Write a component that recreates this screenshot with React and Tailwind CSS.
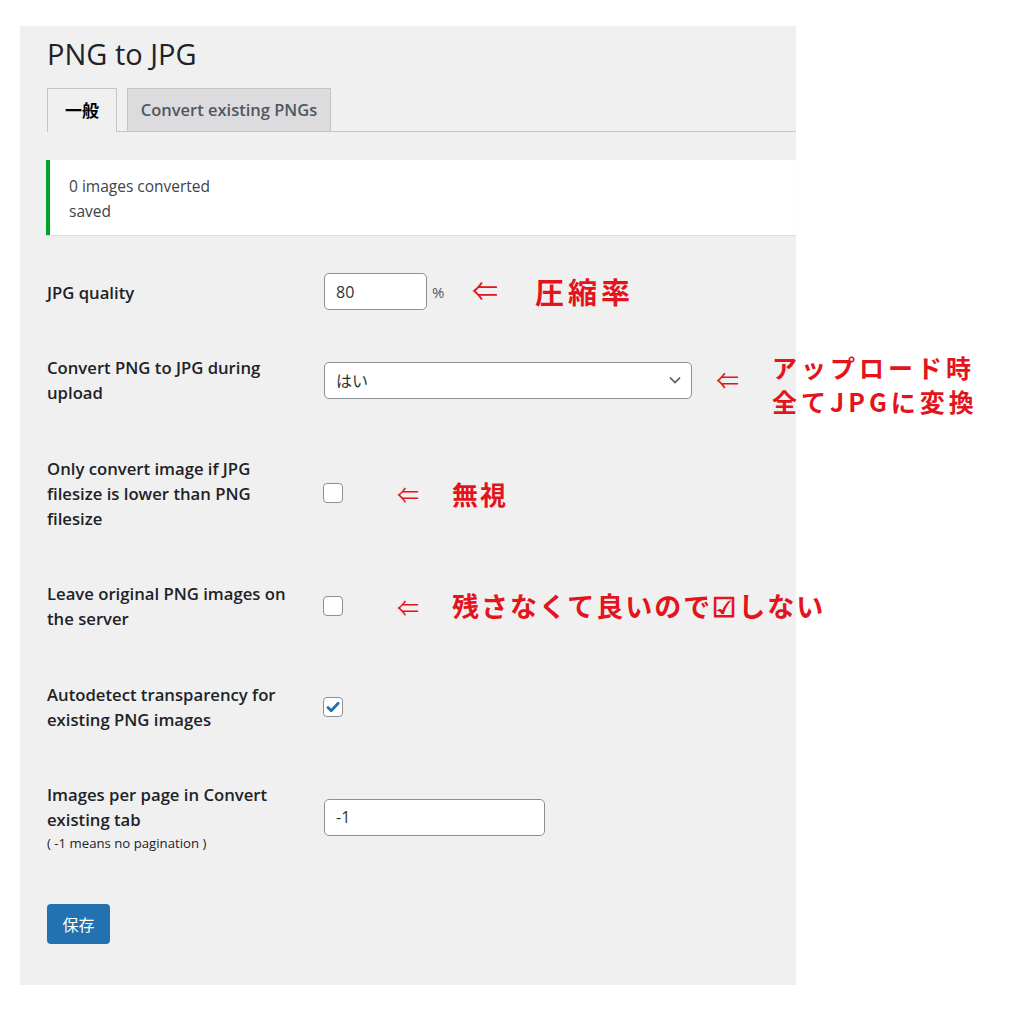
import React from 'react';

const ui = "font-['Open_Sans','Noto_Sans_CJK_JP',sans-serif]";
const jp = "font-['Noto_Sans_CJK_JP',sans-serif]";

// Red arrow + note used to annotate the screenshot
const Arrow = ({ w, size }) => (
  <span className={`${jp} shrink-0 text-[#e3141b] leading-none ${w} ${size}`}>⇐</span>
);

const Note = ({ children, size = 'text-[27px] tracking-[2px]' }) => (
  <span className={`${jp} shrink-0 whitespace-nowrap font-bold text-[#e3141b] ${size}`}>
    {children}
  </span>
);

const Checkbox = ({ checked }) => (
  <span className="-ml-px w-[20px] h-[20px] shrink-0 rounded-[4px] border border-[#8c8f94] bg-white flex items-center justify-center">
    {checked && (
      <svg width="16" height="16" viewBox="0 0 16 16">
        <path d="M3 8.5l3.2 3.2L13.2 4.2" fill="none" stroke="#2271b1" strokeWidth="2.8" strokeLinecap="round" strokeLinejoin="round" />
      </svg>
    )}
  </span>
);

const Row = ({ label, extra, children }) => (
  <div className="flex">
    <div className="w-[277px] shrink-0 pt-[25px] pb-[25.5px] pr-[20px]">
      <div className="text-[16.7px] leading-[25px] font-semibold text-[#1d2327]">{label}</div>
      {extra && <div className="text-[13.2px] leading-[22px] text-[#1d2327]">{extra}</div>}
    </div>
    <div className="flex-1 flex items-center">{children}</div>
  </div>
);

export default function App() {
  return (
    <div className={`${ui} min-h-screen bg-white pt-[26px] pl-[20px]`}>
      <div className="w-[776px] h-[959px] bg-[#f0f0f1] pl-[27px] pt-[10px]">
        <h1 className="text-[29px] leading-[36px] font-normal text-[#1d2327]">PNG to JPG</h1>

        {/* tabs */}
        <div className="mt-[16px] flex items-end gap-[10px] border-b border-[#c3c4c7] h-[44px]">
          <div className="-mb-px w-[70px] h-[44px] border border-b-0 border-[#c3c4c7] bg-[#f0f0f1] flex items-center justify-center text-[17px] font-bold text-black">
            一般
          </div>
          <div className="w-[204px] h-[43px] border border-b-0 border-[#c3c4c7] bg-[#dcdcde] flex items-center justify-center text-[16.5px] font-semibold text-[#50575e]">
            Convert existing PNGs
          </div>
        </div>

        {/* notice */}
        <div className="mt-[28px] -ml-px h-[75px] bg-white border-l-4 border-[#00a32a] shadow-[0_1px_1px_rgba(0,0,0,0.08)] pl-[19px] pt-[14px] text-[15.5px] leading-[25px] text-[#3c434a]">
          <div>0 images converted</div>
          <div>saved</div>
        </div>

        <div className="mt-[19.5px]">
          <Row label="JPG quality">
            <div className="-mt-[1px] w-[103px] h-[37px] rounded-[5px] border border-[#8c8f94] bg-white px-[11px] flex items-center text-[16px] text-[#2c3338]">80</div>
            <span className="ml-[5px] w-[40px] text-[15px] text-[#50575e]">%</span>
            <Arrow w="w-[63px] -mt-[4px]" size="text-[26px]" />
            <Note size="text-[29px] tracking-[4px] -mt-[2px]">圧縮率</Note>
          </Row>

          <Row label={<>Convert PNG to JPG during<br />upload</>}>
            <div className="w-[368px] h-[37px] shrink-0 rounded-[5px] border border-[#8c8f94] bg-white pl-[11px] pr-[10px] flex items-center justify-between text-[16px] text-[#2c3338]">
              <span className={jp}>はい</span>
              <svg width="12" height="8" viewBox="0 0 12 8">
                <path d="M1 1.5l5 5 5-5" fill="none" stroke="#50575e" strokeWidth="1.6" />
              </svg>
            </div>
            <div className="ml-[24px] h-[37px] flex items-start shrink-0">
              <Arrow w="w-[56px] mt-[6px]" size="text-[23px]" />
              <div className={`${jp} -mt-[12px] font-bold text-[#e3141b] text-[25px] leading-[34px] tracking-[4px] whitespace-nowrap`}>
                <div>アップロード時</div>
                <div>全てJPGに変換</div>
              </div>
            </div>
          </Row>

          <Row label={<>Only convert image if JPG<br />filesize is lower than PNG<br />filesize</>}>
            <Checkbox />
            <span className="ml-[54px]" />
            <Arrow w="w-[55px]" size="text-[22px]" />
            <Note size="text-[26px] tracking-[2px]">無視</Note>
          </Row>

          <Row label={<>Leave original PNG images on<br />the server</>}>
            <Checkbox />
            <span className="ml-[54px]" />
            <Arrow w="w-[55px]" size="text-[22px]" />
            <Note>残さなくて良いので☑しない</Note>
          </Row>

          <Row label={<>Autodetect transparency for<br />existing PNG images</>}>
            <Checkbox checked />
          </Row>

          <Row label={<>Images per page in Convert<br />existing tab</>} extra="( -1 means no pagination )">
            <div className="-mt-[2px] w-[221px] h-[37px] rounded-[5px] border border-[#8c8f94] bg-white px-[11px] flex items-center text-[16px] text-[#2c3338]">-1</div>
          </Row>
        </div>

        <button className={`${jp} mt-[24.5px] w-[63px] h-[40px] rounded-[4px] bg-[#2271b1] text-white text-[16px]`}>保存</button>
      </div>
    </div>
  );
}
